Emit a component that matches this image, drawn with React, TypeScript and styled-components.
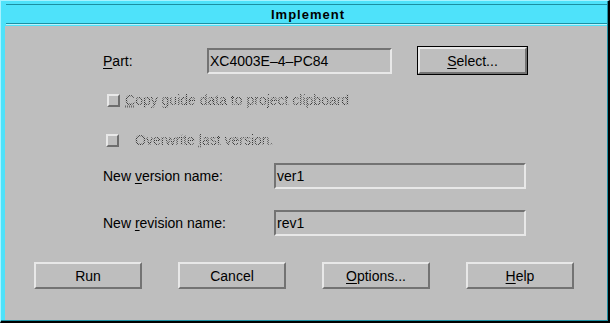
import React from "react";
import styled, { createGlobalStyle } from "styled-components";

const GlobalStyle = createGlobalStyle`
    html, body {
        margin: 0;
        padding: 0;
        background: #000;
    }
    * {
        box-sizing: border-box;
    }
`

const Frame = styled.div`
    width: 610px;
    height: 323px;
    display: flex;
    flex-direction: column;
    background-color: #4ee2fa;
    border-left: 1px solid #a6f2ff;
    border-top: 1px solid #a6f2ff;
    border-right: 2px solid #000;
    border-bottom: 2px solid #000;
    padding: 0 1px 1px 4px;
    box-shadow: inset -1px -1px 0 #1d8fa2;
    font-family: 'Liberation Sans', Arial, sans-serif;
`

const TitleBar = styled.div`
    margin: 3px 0 2px 6px;
    height: 20px;
    display: flex;
    align-items: center;
    justify-content: center;
    border-top: 1px solid #1d8fa2;
    border-bottom: 1px solid #1d8fa2;
    box-shadow: 0 1px 0 #b6f5ff;
    margin-left: 1px;
    height: 20px;

    span {
        font-weight: bold;
        font-size: 13px;
        letter-spacing: 1px;
        color: #000;
        padding-left: 3px;
    }
`

const Body = styled.div`
    flex: 1;
    background-color: #bebebe;
    display: flex;
    flex-direction: column;
    padding-top: 20px;
    font-size: 14px;
    color: #000;
`

const Row = styled.div<{ $top: number, $height: number, $left?: number }>`
    display: flex;
    align-items: center;
    margin-top: ${p => p.$top}px;
    height: ${p => p.$height}px;
    padding-left: ${p => p.$left ?? 98}px;
`

const Label = styled.div<{ $width: number }>`
    width: ${p => p.$width}px;
    flex-shrink: 0;
    white-space: nowrap;
`

const Field = styled.div<{ $width: number }>`
    width: ${p => p.$width}px;
    height: 26px;
    display: flex;
    align-items: center;
    padding-left: 1px;
    border-top: 2px solid #737373;
    border-left: 2px solid #737373;
    border-bottom: 2px solid #e8e8e8;
    border-right: 2px solid #e8e8e8;
    white-space: nowrap;
`

const Bevel = styled.div`
    width: 100%;
    height: 100%;
    display: flex;
    align-items: center;
    justify-content: center;
    border-top: 2px solid #e8e8e8;
    border-left: 2px solid #e8e8e8;
    border-bottom: 2px solid #737373;
    border-right: 2px solid #737373;
`

const DefaultButton = styled.div`
    width: 111px;
    height: 29px;
    margin-left: 25px;
    border: 1px solid #000;
`

const Buttons = styled.div`
    display: flex;
    gap: 36px;
    margin-top: 26px;
    padding-left: 29px;
`

const PushButton = styled.div`
    width: 108px;
    height: 27px;
`

const Check = styled.div<{ $size: number, $gap: number }>`
    width: ${p => p.$size}px;
    height: ${p => p.$size}px;
    margin-right: ${p => p.$gap}px;
    border-top: 2px solid #e8e8e8;
    border-left: 2px solid #e8e8e8;
    border-bottom: 2px solid #6e6e6e;
    border-right: 2px solid #6e6e6e;
    flex-shrink: 0;
`

const Disabled = styled.span`
    white-space: nowrap;
    color: transparent;
    background-image: conic-gradient(#3a3a3a 0 25%, transparent 0 50%, #3a3a3a 0 75%, transparent 0);
    background-size: 2px 2px;
    -webkit-background-clip: text;
    background-clip: text;

    u {
        text-decoration-color: #6a6a6a;
        text-decoration-style: dotted;
    }
`

const Key = styled.u`
    text-underline-offset: 2px;
`

function App() {
    return (
        <>
            <GlobalStyle />
            <Frame>
                <TitleBar>
                    <span>Implement</span>
                </TitleBar>
                <Body>
                    <Row $top={0} $height={29}>
                        <Label $width={104}><Key>P</Key>art:</Label>
                        <Field $width={185}>XC4003E–4–PC84</Field>
                        <DefaultButton>
                            <Bevel><span><Key>S</Key>elect...</span></Bevel>
                        </DefaultButton>
                    </Row>
                    <Row $top={15} $height={20} $left={102}>
                        <Check $size={13} $gap={5} />
                        <Disabled><u>C</u>opy guide data to project clipboard</Disabled>
                    </Row>
                    <Row $top={20} $height={20} $left={101}>
                        <Check $size={13} $gap={16} />
                        <Disabled>Overwrite <u>l</u>ast version.</Disabled>
                    </Row>
                    <Row $top={13} $height={26}>
                        <Label $width={171}>New <Key>v</Key>ersion name:</Label>
                        <Field $width={252}>ver1</Field>
                    </Row>
                    <Row $top={21} $height={26}>
                        <Label $width={171}>New <Key>r</Key>evision name:</Label>
                        <Field $width={252}>rev1</Field>
                    </Row>
                    <Buttons>
                        <PushButton><Bevel>Run</Bevel></PushButton>
                        <PushButton><Bevel>Cancel</Bevel></PushButton>
                        <PushButton><Bevel><span><Key>O</Key>ptions...</span></Bevel></PushButton>
                        <PushButton><Bevel><span><Key>H</Key>elp</span></Bevel></PushButton>
                    </Buttons>
                </Body>
            </Frame>
        </>
    );
}

export default App;
